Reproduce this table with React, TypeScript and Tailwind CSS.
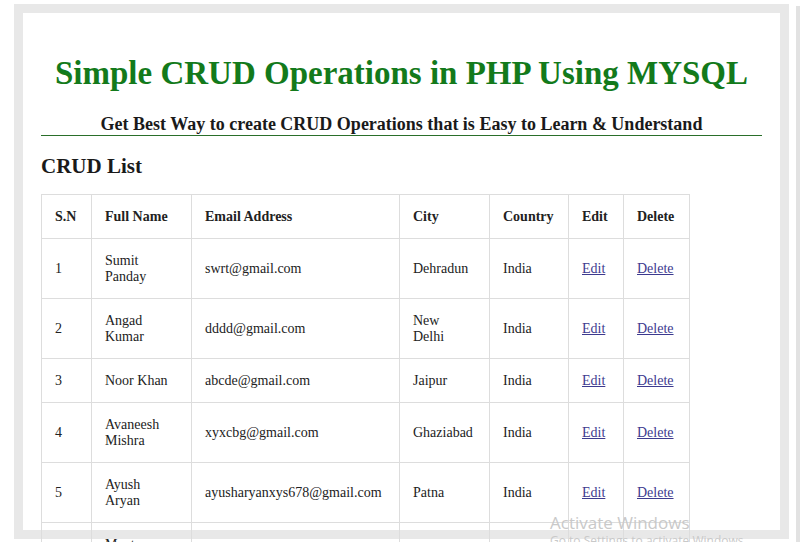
import React from "react";

type Row = {
  sn: number;
  name: string;
  email: string;
  city: string;
  country: string;
};

const rows: Row[] = [
  { sn: 1, name: "Sumit Panday", email: "swrt@gmail.com", city: "Dehradun", country: "India" },
  { sn: 2, name: "Angad Kumar", email: "dddd@gmail.com", city: "New Delhi", country: "India" },
  { sn: 3, name: "Noor Khan", email: "abcde@gmail.com", city: "Jaipur", country: "India" },
  { sn: 4, name: "Avaneesh Mishra", email: "xyxcbg@gmail.com", city: "Ghaziabad", country: "India" },
  { sn: 5, name: "Ayush Aryan", email: "ayusharyanxys678@gmail.com", city: "Patna", country: "India" },
  { sn: 6, name: "Mantu Kumar", email: "mantu@gmail.com", city: "Ranchi", country: "India" },
];

const cell = "border border-[#dddddd] pl-[13px] pr-[16px] pt-[14px] pb-[13px] text-left align-middle leading-4";

function CrudTable() {
  return (
    <table className="w-[648px] table-fixed border-collapse text-[14px] text-[#222222]">
      <colgroup>
        <col className="w-[50px]" />
        <col className="w-[100px]" />
        <col className="w-[208px]" />
        <col className="w-[90px]" />
        <col className="w-[79px]" />
        <col className="w-[55px]" />
        <col className="w-[66px]" />
      </colgroup>
      <thead>
        <tr className="font-bold">
          <th className={cell}>S.N</th>
          <th className={cell}>Full Name</th>
          <th className={cell}>Email Address</th>
          <th className={cell}>City</th>
          <th className={cell}>Country</th>
          <th className={cell}>Edit</th>
          <th className={cell}>Delete</th>
        </tr>
      </thead>
      <tbody>
        {rows.map((r) => (
          <tr key={r.sn}>
            <td className={cell}>{r.sn}</td>
            <td className={cell}>{r.name}</td>
            <td className={cell}>{r.email}</td>
            <td className={cell}>{r.city}</td>
            <td className={cell}>{r.country}</td>
            <td className={cell}>
              <a href="#" className="text-[#3d3a8f] underline">Edit</a>
            </td>
            <td className={cell}>
              <a href="#" className="text-[#3d3a8f] underline">Delete</a>
            </td>
          </tr>
        ))}
      </tbody>
    </table>
  );
}

export default function App() {
  return (
    <div className="relative h-[542px] w-[800px] overflow-hidden bg-white font-['Liberation_Serif','Times_New_Roman',serif]">
      {/* page frame */}
      <div className="ml-[14px] mt-[4px] h-[535px] w-[775px] border-[9px] border-[#e8e8e8] bg-white">
        <div className="px-[18px]">
          <h1 className="pt-[40px] text-center text-[33px] font-bold leading-[40px] text-[#137a1b]">
            Simple CRUD Operations in PHP Using MYSQL
          </h1>
          <h3 className="mt-[21px] border-b border-[#2a6f2a] pb-[1px] text-center text-[18px] font-bold leading-5 text-[#1a1a1a]">
            Get Best Way to create CRUD Operations that is Easy to Learn &amp; Understand
          </h3>
          <h2 className="mt-[18px] text-[21px] font-bold leading-6 text-[#1a1a1a]">CRUD List</h2>
          <div className="mt-[16px]">
            <CrudTable />
          </div>
        </div>
      </div>

      {/* scrollbar strip */}
      <div className="absolute right-0 top-[6px] h-[536px] w-[4px] bg-[#e2e2e2]" />

      {/* windows watermark */}
      <div className="absolute left-[550px] top-[513px] font-['Open_Sans','Liberation_Sans',sans-serif] text-[17px] leading-5 text-[#c9c9c9]">
        Activate Windows
        <div className="text-[12px] leading-4">Go to Settings to activate Windows.</div>
      </div>
    </div>
  );
}
